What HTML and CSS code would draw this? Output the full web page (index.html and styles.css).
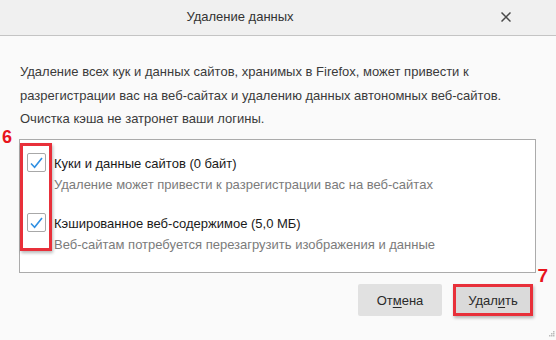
FILE: index.html
```html
<!DOCTYPE html>
<html lang="ru">
<head>
<meta charset="utf-8">
<title>Удаление данных</title>
<link rel="stylesheet" href="styles.css">
</head>
<body>
<div class="dialog">
  <header class="titlebar">
    <span class="title">Удаление данных</span>
    <svg class="close" width="10" height="10" viewBox="0 0 10 10"><path d="M0.5 0.5 L9.5 9.5 M9.5 0.5 L0.5 9.5" stroke="#4a4a4a" stroke-width="1.5" fill="none"/></svg>
  </header>
  <main class="content">
    <p class="desc">Удаление всех кук и данных сайтов, хранимых в Firefox, может привести к<br>разрегистрации вас на веб-сайтах и удалению данных автономных веб-сайтов.<br>Очистка кэша не затронет ваши логины.</p>
    <span class="mark mark-6">6</span>
    <div class="listbox">
      <div class="item">
        <div class="row">
          <span class="checkbox"><svg width="13" height="12" viewBox="0 0 13 12"><path d="M1 6.5 L4.6 10.2 L12 1" stroke="#3090e2" stroke-width="1.6" fill="none"/></svg></span>
          <span class="label">Куки и данные сайтов (0 байт)</span>
        </div>
        <div class="sub">Удаление может привести к разрегистрации вас на веб-сайтах</div>
      </div>
      <div class="item item-2">
        <div class="row">
          <span class="checkbox"><svg width="13" height="12" viewBox="0 0 13 12"><path d="M1 6.5 L4.6 10.2 L12 1" stroke="#3090e2" stroke-width="1.6" fill="none"/></svg></span>
          <span class="label">Кэшированное веб-содержимое (5,0 МБ)</span>
        </div>
        <div class="sub">Веб-сайтам потребуется перезагрузить изображения и данные</div>
      </div>
      <span class="redbox redbox-checks"></span>
    </div>
    <div class="buttons">
      <button class="btn">От<u>м</u>ена</button>
      <button class="btn btn-primary">Удал<u>и</u>ть<span class="redbox redbox-btn"></span></button>
      <span class="mark mark-7">7</span>
    </div>
  </main>
  <svg class="grip" width="6" height="6" viewBox="0 0 6 6"><rect x="4" y="0" width="1.5" height="1.5" fill="#bbb"/><rect x="2" y="2" width="1.5" height="1.5" fill="#bbb"/><rect x="4" y="2" width="1.5" height="1.5" fill="#bbb"/><rect x="0" y="4" width="1.5" height="1.5" fill="#bbb"/><rect x="2" y="4" width="1.5" height="1.5" fill="#bbb"/><rect x="4" y="4" width="1.5" height="1.5" fill="#bbb"/></svg>
</div>
</body>
</html>
```

FILE: styles.css
```css
html, body {
  margin: 0;
  padding: 0;
  background: #fafafa;
}
body {
  font-family: "Liberation Sans", Arial, sans-serif;
  font-size: 13px;
  color: #333;
}
.dialog {
  position: relative;
  width: 556px;
  height: 340px;
  overflow: hidden;
  background: #fafafa;
}
.titlebar {
  position: relative;
  height: 35px;
  background: #f0f0f0;
  border-bottom: 1px solid #c4c4c4;
  display: flex;
  align-items: center;
  justify-content: center;
  padding-right: 76px;
}
.title {
  font-size: 13px;
  color: #333;
  line-height: 20px;
  margin-top: -1px;
}
.close {
  position: absolute;
  right: 45px;
  top: 12px;
}
.content {
  position: relative;
  padding: 24px 20px 0 19px;
}
.desc {
  margin: 0 0 0 1px;
  line-height: 23.5px;
  color: #3a3a3a;
  white-space: nowrap;
}
.mark {
  position: absolute;
  font-family: "Liberation Sans", Arial, sans-serif;
  font-weight: bold;
  color: #e8141c;
  line-height: 1;
}
.mark-6 {
  left: 2px;
  top: 92px;
  font-size: 18px;
}
.mark-7 {
  right: -12px;
  top: -18px;
  font-size: 19px;
}
.listbox {
  position: relative;
  margin-top: 8.5px;
  border: 1px solid #ababab;
  background: #fff;
  padding: 13px 0 0 7px;
  box-sizing: border-box;
  height: 134px;
}
.row {
  display: flex;
  align-items: center;
  gap: 8px;
  height: 19px;
}
.checkbox {
  width: 17px;
  height: 17px;
  border: 1px solid #a8a8a8;
  border-radius: 2px;
  background: #fff;
  display: flex;
  align-items: center;
  justify-content: center;
  flex: none;
}
.checkbox svg {
  margin-top: 1px;
}
.label {
  color: #1a1a1a;
  line-height: 19px;
  margin-top: 1px;
}
.sub {
  margin: 2px 0 0 27px;
  line-height: 22px;
  color: #7b7b7b;
}
.item-2 {
  margin-top: 17px;
}
.redbox {
  position: absolute;
  border: 3px solid #e8303a;
  box-sizing: border-box;
  box-shadow: 1px 2px 3px rgba(0,0,0,0.28);
  pointer-events: none;
}
.redbox-checks {
  left: 0;
  top: 3px;
  width: 32px;
  height: 108px;
}
.buttons {
  position: relative;
  display: flex;
  justify-content: flex-end;
  gap: 11px;
  margin-top: 11px;
  padding-right: 3px;
}
.btn {
  position: relative;
  width: 84px;
  height: 32px;
  border: none;
  border-radius: 2px;
  background: #e1e1e1;
  font-family: inherit;
  font-size: 13px;
  color: #2a2a2a;
  padding: 0;
}
.btn u {
  text-decoration-thickness: 1px;
  text-underline-offset: 2px;
}
.btn-primary {
  width: 80px;
  background: #dadada;
}
.redbox-btn {
  inset: 0;
}
.grip {
  position: absolute;
  right: 1px;
  bottom: 3px;
}
```
